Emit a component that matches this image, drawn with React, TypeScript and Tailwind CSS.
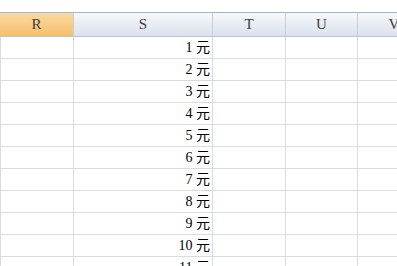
import React from 'react';

const cols = ['R', 'S', 'T', 'U', 'V'];
const widths = ['w-[74px]', 'w-[139px]', 'w-[73px]', 'w-[72px]', 'w-[73px]'];

export default function App() {
  const rows = Array.from({ length: 11 }, (_, i) => i + 1);

  return (
    <div
      className="w-[397px] h-[266px] overflow-hidden bg-white text-[14px] text-black"
      style={{ fontFamily: '"Liberation Serif", "Noto Sans CJK SC", serif' }}
    >
      <div className="h-[12px]" />
      {/* column headers */}
      <div className="flex w-max h-[25px] border-t border-[#9eb6ce] border-b border-b-[#b9c6d6]">
        {cols.map((c, i) => (
          <div
            key={c}
            className={`${widths[i]} shrink-0 flex items-center justify-center border-r border-[#c3cfdc] text-[15px] text-[#3c3c3c] ${
              i === 0
                ? 'bg-gradient-to-b from-[#fbd9a0] to-[#f6c06a]'
                : 'bg-gradient-to-b from-[#f6f8fb] to-[#dbe2ec]'
            }`}
          >
            {c}
          </div>
        ))}
      </div>
      {/* cells */}
      {rows.map((n) => (
        <div key={n} className="flex w-max h-[22px] border-b border-[#d9dcdf]">
          {cols.map((c, i) => (
            <div
              key={c}
              className={`${widths[i]} shrink-0 border-r border-[#d9dcdf] ${i === 0 ? 'border-l' : ''} flex items-center justify-end pr-[2px] leading-none`}
            >
              {i === 1 ? `${n} 元` : ''}
            </div>
          ))}
        </div>
      ))}
    </div>
  );
}
